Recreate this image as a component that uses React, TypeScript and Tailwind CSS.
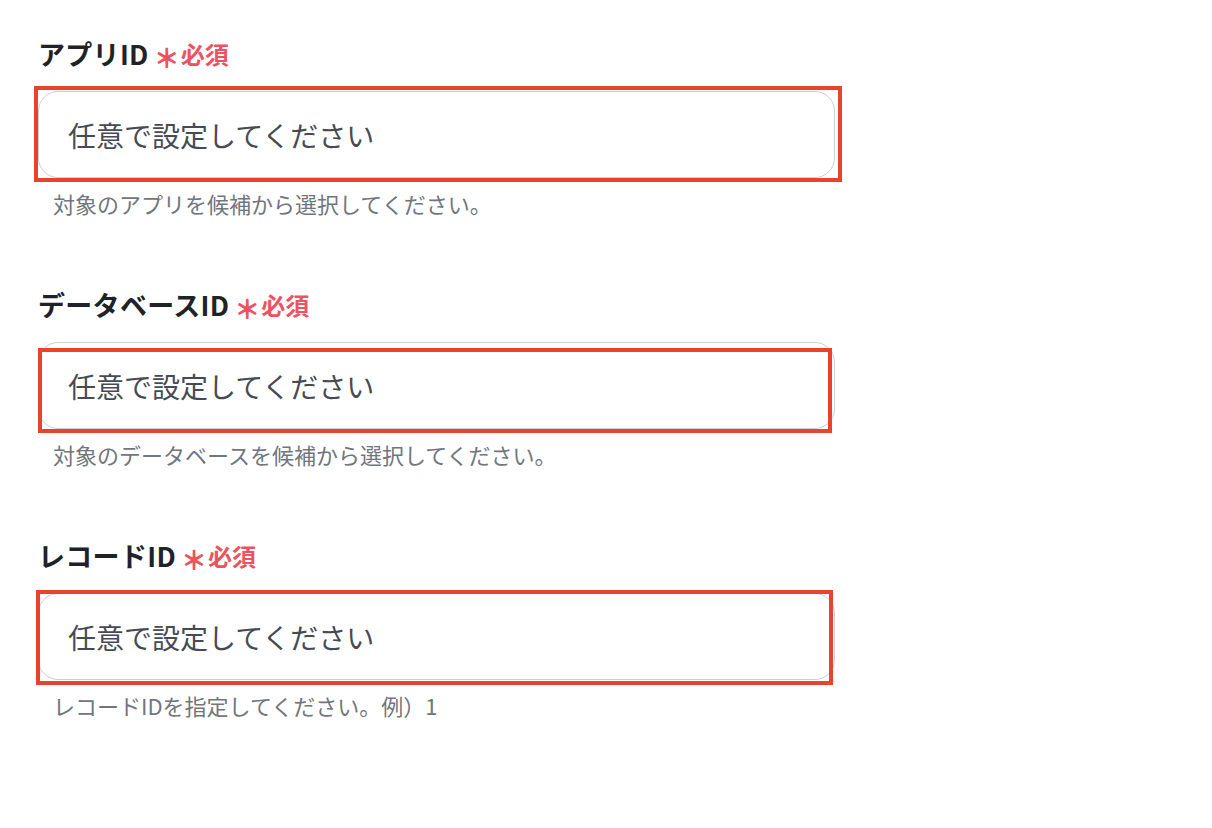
import React from 'react'

interface FieldProps {
    label: string
    help: string
    // red annotation frame, offsets from the input box
    frame: string
}

const Field: React.FC<FieldProps> = ({ label, help, frame }) => {
    return (
        <div className="flex flex-col">
            {/* label */}
            <div className="flex items-center h-[36px] mb-[19px]">
                <span className="text-[27px] font-bold text-[#1f2226] leading-[36px] tracking-[0.3px]">{label}</span>
                <span className="ml-[5px] text-[26px] font-black text-[#ec5261] leading-[36px] translate-y-[3px]">＊</span>
                <span className="ml-[1px] text-[24px] font-bold text-[#ec5261] leading-[36px]">必須</span>
            </div>
            {/* input */}
            <div className="relative w-[797px]">
                <input
                    readOnly
                    placeholder="任意で設定してください"
                    className="w-full h-[87px] rounded-[20px] border-[1.5px] border-[#cbd0d6] bg-white pl-[29px] text-[28px] text-[#464b53] placeholder:text-[#464b53] outline-none"
                    style={{ fontFamily: '"Noto Sans CJK JP", "Noto Sans", sans-serif' }}
                />
                <div className={`absolute border-4 border-[#e8432d] pointer-events-none ${frame}`}></div>
            </div>
            {/* help */}
            <p className="mt-[10px] pl-[15px] text-[22px] leading-[30px] text-[#71767d]">{help}</p>
        </div>
    )
}

export default function App() {
    return (
        <div
            className="w-[1212px] h-[828px] bg-white pl-[38px] pt-[36px] flex flex-col gap-[69px]"
            style={{ fontFamily: '"Noto Sans CJK JP", "Noto Sans", sans-serif' }}
        >
            <Field label="アプリID" help="対象のアプリを候補から選択してください。" frame="-left-[4px] -right-[7px] -top-[5px] -bottom-[4px]" />
            <Field label="データベースID" help="対象のデータベースを候補から選択してください。" frame="left-0 right-[3px] top-[6px] -bottom-[4px]" />
            <Field label="レコードID" help="レコードIDを指定してください。例）1" frame="-left-[2px] right-[2px] -top-[3px] -bottom-[5px]" />
        </div>
    )
}
